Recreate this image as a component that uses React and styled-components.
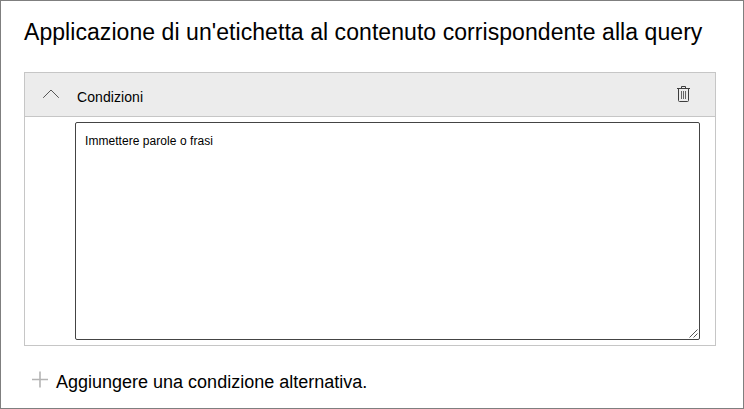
import React from 'react';
import styled, { createGlobalStyle } from 'styled-components';

const GlobalStyle = createGlobalStyle`
  *, *::before, *::after { box-sizing: border-box; }
  body { margin: 0; background: #fff; }
`;

const Page = styled.main`
  width: 744px;
  height: 409px;
  padding: 17px 27px 0 23px;
  border: 1px solid #7f7f7f;
  background: #fff;
  color: #000;
  font-family: "Liberation Sans", Arial, sans-serif;
  overflow: hidden;
`;

const Title = styled.h1`
  margin: 0;
  height: 54px;
  font-size: 23px;
  letter-spacing: 0.06px;
  line-height: 28px;
  font-weight: 400;
  white-space: nowrap;
`;

const Panel = styled.section`
  width: 692px;
  height: 274px;
  border: 1px solid #c6c6c6;
`;

const PanelHeader = styled.header`
  display: flex;
  align-items: center;
  height: 44px;
  padding: 0 24px 2px 17px;
  background: #ececec;
  border-bottom: 1px solid #c6c6c6;
`;

const PanelTitle = styled.h2`
  flex: 1;
  margin: 6px 0 0 17px;
  font-size: 14px;
  letter-spacing: 0.08px;
  line-height: 16px;
  font-weight: 400;
`;

const IconButton = styled.button`
  display: flex;
  padding: 0;
  border: 0;
  background: none;
`;

const PanelBody = styled.div`
  padding: 5px 15px 5px 50px;
`;

const QueryField = styled.div`
  display: flex;
  justify-content: space-between;
  width: 625px;
  height: 218px;
  padding: 11px 0 0 9px;
  border: 1px solid #444;
  border-radius: 2px;
  font-size: 12px;
  letter-spacing: 0.05px;
  line-height: 14px;
`;

const Grip = styled.svg`
  align-self: flex-end;
`;

const AddButton = styled.button`
  display: flex;
  align-items: center;
  gap: 8px;
  margin: 24px 0 0 7px;
  padding: 0;
  border: 0;
  background: none;
  color: #000;
  font: 18px/24px "Liberation Sans", Arial, sans-serif;
  white-space: nowrap;
`;

const PlusIcon = styled.svg`
  margin-top: -6px;
`;

function Chevron() {
  return (
    <svg width="18" height="12" viewBox="0 0 18 12" fill="none" stroke="#555">
      <path d="M1.2 9.8 9 2l7.8 7.8" />
    </svg>
  );
}

function Trash() {
  return (
    <svg width="15" height="18" viewBox="0 0 15 18" fill="none" stroke="#3d3d3d">
      <path d="M1 3.5h13M5.5 3V1.5h4V3M2.5 4v11.5q0 1 1 1h8q1 0 1-1V4" />
      <path d="M5.5 6v8M7.5 6v8M9.5 6v8" stroke="#666" />
    </svg>
  );
}

export default function App() {
  return (
    <>
      <GlobalStyle />
      <Page>
        <Title>Applicazione di un'etichetta al contenuto corrispondente alla query</Title>
        <Panel>
          <PanelHeader>
            <IconButton aria-label="Comprimi"><Chevron /></IconButton>
            <PanelTitle>Condizioni</PanelTitle>
            <IconButton aria-label="Elimina"><Trash /></IconButton>
          </PanelHeader>
          <PanelBody>
            <QueryField>
              <span>Immettere parole o frasi</span>
              <Grip width="10" height="10" viewBox="0 0 10 10" stroke="#555" fill="none">
                <path d="M0.5 8.5 8.5 0.5M4.5 8.5 8.5 4.5" />
              </Grip>
            </QueryField>
          </PanelBody>
        </Panel>
        <AddButton>
          <PlusIcon width="17" height="17" viewBox="0 0 17 17" fill="none">
            <path d="M1 8.5h16M9 0.5v16" stroke="#b4b4b4" strokeWidth="1.6" />
          </PlusIcon>
          <span>Aggiungere una condizione alternativa.</span>
        </AddButton>
      </Page>
    </>
  );
}
